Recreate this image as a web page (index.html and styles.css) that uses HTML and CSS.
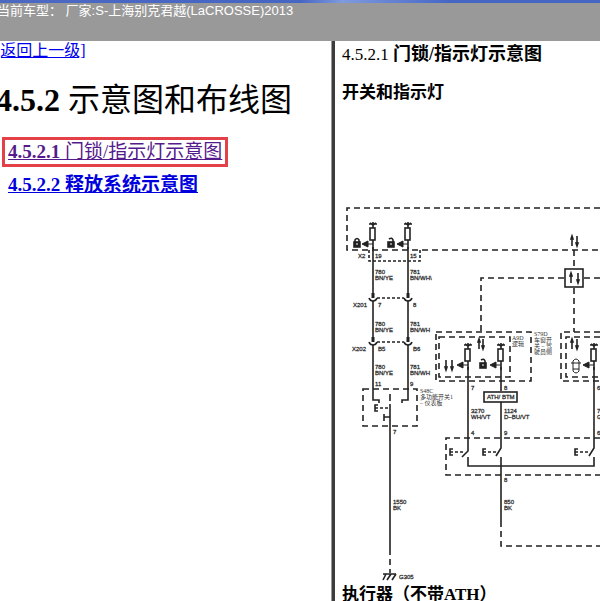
FILE: index.html
```
<!DOCTYPE html>
<html lang="zh-CN">
<head>
<meta charset="utf-8">
<title>4.5.2 示意图和布线图</title>
<link rel="stylesheet" href="styles.css">
</head>
<body>
<header class="topbar">当前车型： 厂家:S-上海别克君越(LaCROSSE)2013</header>
<div class="frames">
  <nav class="index">
    <a class="back" href="#">[返回上一级]</a>
    <h1>4.5.2 <span class="regular">示意图和布线图</span></h1>
    <ul class="topics">
      <li><a class="topic current" href="#diagram">4.5.2.1 <span class="regular">门锁/指示灯示意图</span></a></li>
      <li><a class="topic" href="#release">4.5.2.2 释放系统示意图</a></li>
    </ul>
  </nav>
  <main class="content">
    <h2>4.5.2.1 <b>门锁/指示灯示意图</b></h2>
    <h3>开关和指示灯</h3>
    <svg class="diagram" id="diagram" width="257" height="381" viewBox="343 201 257 381" role="img" aria-label="门锁/指示灯示意图">
      <defs>
        <g id="lamp"><path d="M-4 -11H4M-3 -12L0 -10L3 -12M0 -13V-7M0 5V14"/><rect x="-3" y="-7" width="5" height="12"/></g>
        <path id="left" d="M0 0H-5M-5 -3L-11 0L-5 3Z" fill="#222" stroke-width="1"/>
        <path id="up" d="M0 5V-4M-1 -2L0 -5L1 -2Z" fill="#222"/>
        <path id="down" d="M0 -5V4M-1 2L0 5L1 2Z" fill="#222"/>
        <g id="lock"><rect x="-3" y="-1" width="6" height="5" fill="#222"/><path d="M-2 -1V-3Q0 -6 2 -3V-1"/><path d="M0 0V2" stroke="#fff" stroke-width="1"/></g>
        <g id="unlock"><rect x="-3" y="-1" width="6" height="5" fill="#222"/><path d="M2 -1V-3Q1 -6 -2 -4"/><path d="M0 0V2" stroke="#fff" stroke-width="1"/></g>
        <g id="plug"><path d="M0 -6V-1" stroke-width="3"/><path d="M-4 -1Q-3 2 0 2Q3 2 4 -1"/></g>
        <g id="switch"><path d="M3 -3H0V3H3M0 0H3"/><path d="M5 0H15" stroke-dasharray="3 2"/></g>
      </defs>

      <g class="wire dashed">
        <path d="M600 208H347V250H600"/>
        <path d="M369 250V261H420V250" stroke-dasharray="3 2"/>
        <path d="M377 298H404M377 342H404" stroke-dasharray="3 2"/>
        <rect x="363" y="389" width="54" height="37"/>
        <path d="M574 250V268M574 288V332M564 278H481V332M584 278H600"/>
        <rect x="436" y="332" width="95" height="49"/>
        <rect x="439" y="337" width="71" height="40"/>
        <path d="M600 332H561V381H600M600 337H566V377H600"/>
        <path d="M600 438H446V475H600"/>
        <path d="M390 549V573M501 521V546H600"/>
      </g>

      <g class="wire">
        <path d="M373 247V295M373 301V338M373 345V400H379V403"/>
        <path d="M408 247V295M408 301V338M408 345V400H402V403"/>
        <path d="M390 394V401M390 404V549M384 417H390M384 414V421"/>
        <path d="M468 367V451L462 457M468 457V466H594V457"/>
        <path d="M501 367V391M501 402V448L496 456M501 457V521"/>
        <path d="M594 367V448L589 456"/>
        <path d="M383 574H396M386 574L383 580M391 574L387 580M396 574L392 580"/>
        <rect x="565" y="269" width="18" height="18"/>
        <rect x="484" y="392" width="33" height="10"/>
        <use href="#lamp" x="373" y="235"/><use href="#lamp" x="408" y="235"/>
        <use href="#lamp" x="468" y="356"/><use href="#lamp" x="501" y="356"/><use href="#lamp" x="594" y="356"/>
        <use href="#left" x="373" y="244"/><use href="#left" x="408" y="244"/>
        <use href="#left" x="468" y="365"/><use href="#left" x="501" y="365"/><use href="#left" x="594" y="365"/>
        <use href="#lock" x="357" y="243"/><use href="#unlock" x="391" y="243"/><use href="#unlock" x="483" y="364"/>
        <use href="#up" x="572" y="241"/><use href="#down" x="577" y="241"/>
        <use href="#up" x="571" y="278"/><use href="#down" x="578" y="278"/>
        <use href="#up" x="479" y="344"/><use href="#down" x="483" y="344"/>
        <use href="#up" x="572" y="344"/><use href="#down" x="577" y="344"/>
        <use href="#down" x="446" y="365"/><use href="#down" x="452" y="365"/>
        <use href="#plug" x="373" y="299"/><use href="#plug" x="408" y="299"/>
        <use href="#plug" x="373" y="343"/><use href="#plug" x="408" y="343"/>
        <use href="#switch" x="375" y="408"/>
        <use href="#switch" x="450" y="452"/><use href="#switch" x="483" y="452"/><use href="#switch" x="575" y="452"/>
        <path d="M573 361Q576 357 579 361V371Q576 375 573 371ZM573 363H579M573 369H579M571 363H573M579 363H581" stroke-width="1"/>
      </g>

      <g class="label">
        <text x="358" y="258">X2</text><text x="375" y="258">19</text><text x="410" y="258">15</text>
        <text x="375" y="274">780</text><text x="375" y="280">BN/YE</text>
        <text x="410" y="274">781</text><text x="410" y="280">BN/WH\</text>
        <text x="353" y="307">X201</text><text x="378" y="307">7</text><text x="413" y="307">8</text>
        <text x="375" y="326">780</text><text x="375" y="332">BN/YE</text>
        <text x="410" y="326">781</text><text x="410" y="332">BN/WH</text>
        <text x="352" y="351">X202</text><text x="378" y="351">B5</text><text x="413" y="351">B6</text>
        <text x="375" y="369">780</text><text x="375" y="375">BN/YE</text>
        <text x="410" y="369">781</text><text x="410" y="375">BN/WH</text>
        <text x="375" y="386">11</text><text x="410" y="386">9</text><text x="393" y="434">7</text>
        <text x="471" y="390">7</text><text x="504" y="390">8</text><text x="597" y="390">6</text>
        <text x="487" y="399">ATH/ BTM</text>
        <text x="471" y="413">3270</text><text x="471" y="419">WH/VT</text>
        <text x="504" y="413">1124</text><text x="504" y="419">D–BU/VT</text>
        <text x="597" y="413">7</text><text x="597" y="419">G</text>
        <text x="471" y="435">4</text><text x="504" y="435">9</text><text x="597" y="435">6</text>
        <text x="504" y="482">8</text>
        <text x="504" y="504">850</text><text x="504" y="510">BK</text>
        <text x="393" y="504">1550</text><text x="393" y="510">BK</text>
        <text x="399" y="579">G305</text>
      </g>
      <g class="label note">
        <text x="420" y="393">S48C</text><text x="420" y="399">多功能开关1</text><text x="420" y="405">– 仪表板</text>
        <text x="512" y="340">A9D</text><text x="512" y="346">逻辑</text>
        <text x="534" y="336">S79D</text><text x="534" y="342">车窗开</text><text x="534" y="348">关 – 驾</text><text x="534" y="354">驶员侧</text>
      </g>
    </svg>
    <h3 class="next">执行器（不带ATH）</h3>
  </main>
</div>
</body>
</html>
```
FILE: styles.css
```
* {
  box-sizing: border-box;
}

body {
  display: flex;
  flex-direction: column;
  height: 100vh;
  margin: 0;
  overflow: hidden;
  background: #fff;
  color: #000;
  font: 16px/20px "Liberation Serif", "Noto Sans CJK SC", serif;
}

h1, h2, h3 {
  margin: 0;
  white-space: nowrap;
}

.topbar {
  flex: none;
  height: 41px;
  padding-top: 3px;
  background: linear-gradient(90deg, #4c69c2, #4666c4 50%, #7f9ade 57%, #4666c4 75%) top / 100% 3px no-repeat #999;
  color: #fff;
  font: 13px/16px "Liberation Sans", "Noto Sans CJK SC", sans-serif;
  text-indent: -3px;
  white-space: nowrap;
}

.frames {
  display: grid;
  flex: 1;
  grid-template-columns: 335fr 265fr;
  min-height: 0;
}

.index {
  overflow: hidden;
  border-right: 3px solid #3c3c3c;
  box-shadow: inset -1px 0 #999;
}

.back {
  display: block;
  width: fit-content;
  margin-left: -5px;
  color: #0000ee;
}

h1 {
  margin: 20px 0 18px -4px;
  font-size: 32px;
  line-height: 38px;
}

.regular {
  font-weight: 400;
}

.topics {
  display: flex;
  flex-direction: column;
  align-items: flex-start;
  gap: 3px;
  margin: 0;
  padding: 0 2px;
  list-style: none;
}

.topic {
  display: block;
  border: 3px solid transparent;
  padding: 0 3px;
  color: #0000dd;
  font-size: 19px;
  font-weight: 700;
  line-height: 24px;
  white-space: nowrap;
}

.current {
  border-color: #e34048;
  color: #551a8b;
}

.content {
  min-width: 0;
  overflow: hidden;
  padding: 3px 0 0 7px;
}

h2 {
  font-size: 17px;
  font-weight: 400;
  line-height: 20px;
}

h2 b {
  font-size: 18px;
}

h3 {
  margin-top: 18px;
  font-size: 17px;
  line-height: 20px;
}

.diagram {
  display: block;
  margin: 98px 0 0 1px;
}

.next {
  margin-top: 3px;
}

.wire {
  fill: none;
  stroke: #222;
  stroke-width: 1.6;
}

.dashed {
  stroke-dasharray: 6 4;
}

.label {
  fill: #333;
  stroke: #333;
  stroke-width: 0.3;
  font: 6px "Liberation Sans", "Noto Sans CJK SC", sans-serif;
}

.note {
  stroke-width: 0;
  font-family: "Liberation Serif", "Noto Sans CJK SC", serif;
}
```
